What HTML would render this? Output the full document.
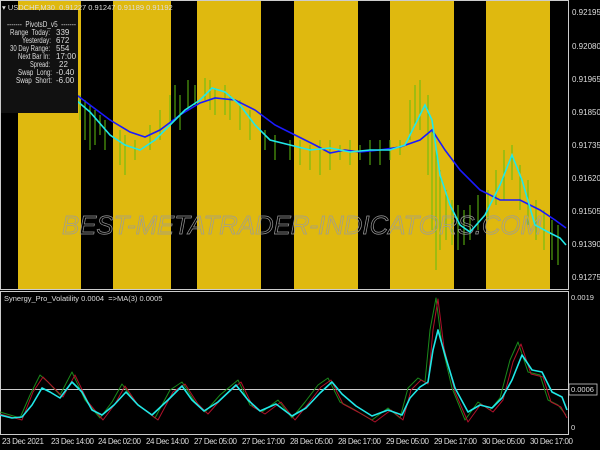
<!DOCTYPE html>
<html><head><meta charset="utf-8"><style>
html,body{margin:0;padding:0;background:#000;width:600px;height:450px;overflow:hidden}
svg{display:block}
text{font-family:"Liberation Sans",sans-serif;font-size:8px;fill:#ddd;white-space:pre}
</style></head><body>
<svg width="600" height="450" viewBox="0 0 600 450">
<rect width="600" height="450" fill="#000"/>
<g fill="#dfb90f">
<rect x="18" y="1" width="63" height="288"/>
<rect x="113" y="1" width="58" height="288"/>
<rect x="197" y="1" width="64" height="288"/>
<rect x="294" y="1" width="64" height="288"/>
<rect x="390" y="1" width="64" height="288"/>
<rect x="486" y="1" width="64" height="288"/>
</g>
<g stroke="#5fbf10" stroke-width="1">
<path d="M80 95V120M85 100V140M90 105V150M95 110V145M100 115V135M105 120V150M120 130V165M125 135V175M135 140V160M150 125V150M160 110V140M170 95V125M175 85V120M180 95V130M188 80V110M195 85V105M205 78V100M210 80V110M215 88V115M225 85V115M230 95V120M240 100V130M250 110V140M265 130V150M275 135V160M290 140V160M300 140V165M310 145V170M320 140V175M330 140V170M340 145V160M350 140V165M360 145V160M370 140V165M380 140V165M390 140V160M400 140V155M410 100V140M415 85V125M420 80V130M428 95V175M432 130V230M436 150V270M440 170V250M446 190V240M452 200V245M458 205V250M464 210V245M470 205V240M478 195V230M488 190V220M496 170V205M504 150V200M512 145V180M520 165V210M528 180V225M536 200V240M544 210V250M552 220V260M558 225V265"/>
</g>
<text x="62" y="234" style="font-size:26px;font-style:italic;fill:none;stroke:#9a9a9a;stroke-width:0.7" textLength="480" lengthAdjust="spacingAndGlyphs">BEST-METATRADER-INDICATORS.COM</text>
<polyline fill="none" stroke="#1a1aff" stroke-width="1.6" points="70,90 90,105 110,120 130,132 145,137 160,130 180,115 200,103 215,98 235,100 255,110 275,125 295,135 315,145 330,153 345,150 360,152 380,150 400,147 420,140 432,130 445,150 460,170 480,190 500,200 520,200 540,210 555,220 566,228"/>
<polyline fill="none" stroke="#20e8e8" stroke-width="1.6" points="70,95 90,112 110,135 125,145 140,150 155,140 170,125 185,110 200,100 212,88 225,92 240,105 255,125 270,140 290,145 310,150 330,148 350,152 370,150 390,150 405,145 415,125 425,105 432,120 440,175 450,205 460,225 470,232 485,215 500,185 512,155 522,180 535,225 548,232 560,238 566,245"/>
<rect x="0" y="10" width="78" height="103" fill="#111"/>
<text x="2" y="10" style="font-size:7.5px">▾ USDCHF,M30  0.91227 0.91247 0.91189 0.91192</text>
<g style="font-size:7px">
<text x="7" y="27" textLength="69" lengthAdjust="spacingAndGlyphs">-------  PivotsD_v5  -------</text>
<g>
<text x="10" y="35" textLength="40" lengthAdjust="spacingAndGlyphs">Range  Today:</text>
<text x="22" y="43" textLength="29" lengthAdjust="spacingAndGlyphs">Yesterday:</text>
<text x="10" y="51" textLength="40" lengthAdjust="spacingAndGlyphs">30 Day Range:</text>
<text x="18" y="59" textLength="32" lengthAdjust="spacingAndGlyphs">Next Bar In:</text>
<text x="30" y="67" textLength="20" lengthAdjust="spacingAndGlyphs">Spread:</text>
<text x="18" y="75" textLength="34" lengthAdjust="spacingAndGlyphs">Swap  Long:</text>
<text x="16" y="83" textLength="36" lengthAdjust="spacingAndGlyphs">Swap  Short:</text>
</g>
<text x="56" y="35">339</text>
<text x="56" y="43">672</text>
<text x="56" y="51">554</text>
<text x="56" y="59">17:00</text>
<text x="59" y="67">22</text>
<text x="56" y="75">-0.40</text>
<text x="56" y="83">-6.00</text>
</g>
<rect x="0.5" y="0.5" width="568" height="289" fill="none" stroke="#ccc" stroke-width="1"/>
<rect x="0.5" y="291.5" width="568" height="143" fill="none" stroke="#ccc" stroke-width="1"/>
<g style="font-size:7.5px">
<text x="572" y="15">0.92195</text>
<text x="572" y="49">0.92080</text>
<text x="572" y="82">0.91965</text>
<text x="572" y="115">0.91850</text>
<text x="572" y="148">0.91735</text>
<text x="572" y="181">0.91620</text>
<text x="572" y="214">0.91505</text>
<text x="572" y="247">0.91390</text>
<text x="572" y="280">0.91275</text>
</g>
<text x="4" y="301" style="font-size:7.5px">Synergy_Pro_Volatility 0.0004  =&gt;MA(3) 0.0005</text>
<line x1="1" y1="389.5" x2="568" y2="389.5" stroke="#ccc" stroke-width="1"/>
<polyline fill="none" stroke="#1a8a1a" stroke-width="1" stroke-linejoin="round" points="0,412 20,418 30,395 40,375 48,382 60,395 72,372 85,400 100,418 112,402 122,384 135,402 155,418 170,390 182,382 195,402 205,412 220,395 238,380 250,405 262,412 278,400 292,418 305,402 318,385 328,378 340,402 355,410 372,420 388,408 400,418 408,388 418,378 425,382 430,330 436,298 442,345 452,388 465,420 478,402 490,410 500,398 510,360 518,342 528,372 540,375 548,400 558,405 566,415"/>
<polyline fill="none" stroke="#b0102a" stroke-width="1" stroke-linejoin="round" points="0,414 22,420 33,392 43,377 51,385 63,397 75,375 88,402 103,420 115,404 125,386 138,405 158,420 173,392 185,384 198,404 208,414 223,397 241,382 253,407 265,414 281,402 295,420 308,404 321,387 331,380 343,404 358,412 375,422 391,410 403,420 411,390 421,380 428,384 433,330 438,299 444,348 455,392 468,422 481,404 493,412 503,400 513,362 521,344 531,374 543,377 551,402 561,407 567,418"/>
<polyline fill="none" stroke="#20e8e8" stroke-width="1.6" stroke-linejoin="round" points="0,415 12,418 22,417 32,405 42,388 50,392 60,398 72,382 82,392 92,410 102,415 114,405 126,392 138,405 152,415 168,400 182,386 192,400 204,411 218,402 236,385 248,400 260,411 276,404 292,416 306,408 320,393 332,382 342,394 356,406 372,416 388,410 402,415 410,398 420,387 428,382 433,350 438,330 445,355 455,388 468,412 480,405 492,408 502,398 512,380 522,355 532,370 542,372 552,392 562,397 567,410"/>
<text x="571" y="300" style="font-size:7.5px">0.0019</text>
<rect x="569" y="384" width="28" height="11" fill="#000" stroke="#ccc" stroke-width="0.8"/>
<text x="571" y="392" style="font-size:7.5px">0.0006</text>
<text x="571" y="430" style="font-size:7.5px">0</text>
<g style="font-size:7px">
<text x="2" y="444" textLength="42">23 Dec 2021</text>
<text x="51" y="444" textLength="43">23 Dec 14:00</text>
<text x="98" y="444" textLength="43">24 Dec 02:00</text>
<text x="146" y="444" textLength="43">24 Dec 14:00</text>
<text x="194" y="444" textLength="43">27 Dec 05:00</text>
<text x="242" y="444" textLength="43">27 Dec 17:00</text>
<text x="290" y="444" textLength="43">28 Dec 05:00</text>
<text x="338" y="444" textLength="43">28 Dec 17:00</text>
<text x="386" y="444" textLength="43">29 Dec 05:00</text>
<text x="434" y="444" textLength="43">29 Dec 17:00</text>
<text x="482" y="444" textLength="43">30 Dec 05:00</text>
<text x="530" y="444" textLength="43">30 Dec 17:00</text>
</g>
</svg>
</body></html>
